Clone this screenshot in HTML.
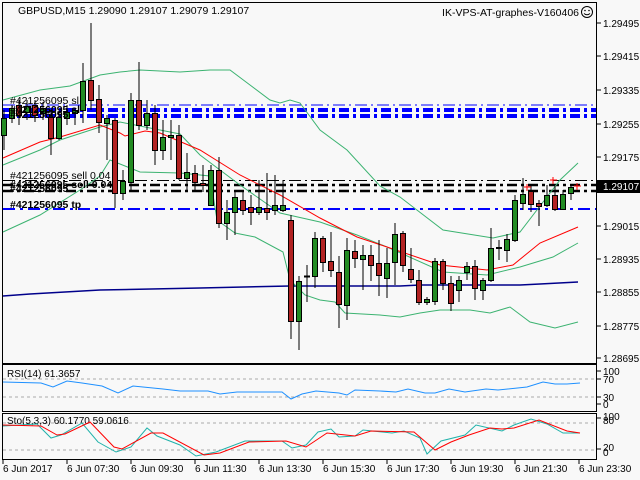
<!DOCTYPE html>
<html><head><meta charset="utf-8"><style>
html,body{margin:0;padding:0;background:#f8f8f8;width:640px;height:480px;overflow:hidden}
svg{display:block}
text{font-family:"Liberation Sans",sans-serif;font-size:10px;fill:#000}
</style></head><body>
<svg width="640" height="480" viewBox="0 0 640 480" xmlns="http://www.w3.org/2000/svg">
<rect width="640" height="480" fill="#f8f8f8"/>
<g fill="none" stroke="#000" stroke-width="1">
<rect x="2.5" y="2.5" width="594" height="361"/>
<rect x="2.5" y="364.5" width="594" height="47"/>
<rect x="2.5" y="413.5" width="594" height="46"/>
</g>
<g stroke="#000"><path d="M597 23h4M597 56h4M597 90h4M597 124h4M597 157h4M597 226h4M597 259h4M597 292h4M597 326h4M597 358h4M597 371h4M597 379h4M597 397h4M597 404h4M597 418h4M597 449h4"/>
<path d="M3 460v4M67 460v4M131 460v4M195 460v4M259 460v4M323 460v4M387 460v4M451 460v4M515 460v4M579 460v4"/></g>
<g>
<text x="603" y="27">1.29495</text><text x="603" y="60">1.29415</text><text x="603" y="94">1.29335</text><text x="603" y="128">1.29255</text><text x="603" y="161">1.29175</text><text x="603" y="230">1.29015</text><text x="603" y="263">1.28935</text><text x="603" y="296">1.28855</text><text x="603" y="330">1.28775</text><text x="603" y="362">1.28695</text>
<text x="603" y="375">100</text><text x="603" y="383">70</text><text x="603" y="401">30</text><text x="603" y="408">0</text>
<text x="603" y="420">100</text><text x="603" y="424">80</text><text x="603" y="451">20</text><text x="603" y="456">0</text>
</g>
<rect x="597" y="180" width="43" height="13" fill="#000"/>
<text x="603" y="190" style="fill:#fff">1.29107</text>
<g><text x="3" y="472">6 Jun 2017</text><text x="67" y="472">6 Jun 07:30</text><text x="131" y="472">6 Jun 09:30</text><text x="195" y="472">6 Jun 11:30</text><text x="259" y="472">6 Jun 13:30</text><text x="323" y="472">6 Jun 15:30</text><text x="387" y="472">6 Jun 17:30</text><text x="451" y="472">6 Jun 19:30</text><text x="515" y="472">6 Jun 21:30</text><text x="579" y="472">6 Jun 23:30</text></g>
<g fill="none">
<path d="M3 105H596" stroke="#0000ff" stroke-dasharray="12,4,2,4"/>
<path d="M3 110H596M3 116H596" stroke="#0000ff" stroke-width="4" stroke-dasharray="10,4,3,4"/>
<path d="M3 180.5H596" stroke="#000" stroke-dasharray="12,4,2,4"/>
<path d="M3 185H596M3 191H596" stroke="#000" stroke-width="2.5" stroke-dasharray="10,4,3,4"/>
<path d="M3 209H596" stroke="#0000ff" stroke-width="2" stroke-dasharray="12,5,3,5"/>
</g>
<g fill="none" stroke-width="1">
<path stroke="#00008b" stroke-width="1.5" d="M3 296L30 294L100 290L200 288L290 286L400 286L420 285L520 285L540 284L578 282"/>
<path stroke="#3cb371" d="M3 100L40 90L70 86L100 75L120 72L140 70L180 72L210 70L230 70L250 85L270 100L280 103L290 100L300 103L320 130L347 150L380 186L400 197L443 230L493 238L520 232L540 206L560 180L578 163"/>
<path stroke="#3cb371" d="M3 165L40 150L60 140L100 127L120 122L140 126L180 134L200 155L240 185L280 213L320 222L357 235L387 247L443 272L487 275L520 267L553 257L578 243"/>
<path stroke="#3cb371" d="M3 232L40 215L80 190L100 176L110 160L140 172L180 173L210 176L217 220L235 233L255 237L283 252L290 280L305 295L320 300L335 302L345 313L380 315L400 317L420 313L440 310L470 310L490 313L510 307L530 322L555 328L578 322"/>
<path stroke="#ff0000" d="M3 158L40 142L60 137L100 125L120 133L125 136L145 131L160 133L200 150L240 175L280 195L320 218L357 237L387 247L440 265L487 270L513 265L540 243L578 227"/>
</g>
<g stroke="#000" stroke-width="1">
<path d="M4 110V150M12 105V123M19 100V125M27 100V120M35 100V122M43 102V120M51 110V155M59 112V140M67 105V125M75 108V125M83 63V123M91 23V110M99 85V133M107 115V160M115 118V208M123 170V200M131 93V190M139 62V130M147 100V130M155 105V165M163 120V160M171 120V160M179 125V180M187 153V190M195 165V190M203 165V192M211 165V205M219 157V228M227 200V240M235 190V235M243 190V215M251 195V225M259 180V215M267 173V220M275 175V215M283 180V212M291 215V339M299 276V350M307 265V302M315 232V288M323 236V272M331 232V277M339 256V328M347 238V320M355 240V268M363 245V290M371 245V281M379 240V296M387 248V298M395 223V285M403 231V272M411 248V283M419 270V305M427 297V305M435 258V305M443 259V290M451 276V311M459 276V302M467 262V280M475 260V300M483 278V300M491 228V282M499 240V260M507 234V262M515 195V242M523 178V210M531 184V212M539 200V226M547 185V207M555 186V211M563 190V209M571 185V200"/>
</g>
<g stroke="#000" stroke-width="1" fill="#228b22">
<rect x="1.5" y="118.5" width="5" height="17"/><rect x="9.5" y="108.5" width="5" height="10"/><rect x="24.5" y="106.5" width="5" height="6"/><rect x="40.5" y="108.5" width="5" height="5"/><rect x="56.5" y="117.5" width="5" height="21"/><rect x="64.5" y="112.5" width="5" height="6"/><rect x="72.5" y="110.5" width="5" height="3"/><rect x="80.5" y="81.5" width="5" height="29"/><rect x="104.5" y="118.5" width="5" height="5"/><rect x="120.5" y="181.5" width="5" height="12"/><rect x="128.5" y="100.5" width="5" height="82"/><rect x="144.5" y="113.5" width="5" height="12"/><rect x="160.5" y="137.5" width="5" height="13"/><rect x="168.5" y="135.5" width="5" height="2"/><rect x="184.5" y="172.5" width="5" height="6"/><rect x="208.5" y="170.5" width="5" height="35"/><rect x="224.5" y="212.5" width="5" height="11"/><rect x="232.5" y="197.5" width="5" height="15"/><rect x="256.5" y="207.5" width="5" height="5"/><rect x="272.5" y="205.5" width="5" height="5"/><rect x="280.5" y="205.5" width="5" height="5"/><rect x="296.5" y="281.5" width="5" height="40"/><rect x="312.5" y="238.5" width="5" height="38"/><rect x="344.5" y="250.5" width="5" height="55"/><rect x="360.5" y="255.5" width="5" height="4"/><rect x="384.5" y="263.5" width="5" height="15"/><rect x="392.5" y="234.5" width="5" height="28"/><rect x="424.5" y="299.5" width="5" height="3"/><rect x="432.5" y="261.5" width="5" height="40"/><rect x="456.5" y="280.5" width="5" height="10"/><rect x="464.5" y="266.5" width="5" height="6"/><rect x="480.5" y="280.5" width="5" height="10"/><rect x="488.5" y="248.5" width="5" height="32"/><rect x="504.5" y="239.5" width="5" height="11"/><rect x="512.5" y="200.5" width="5" height="40"/><rect x="520.5" y="194.5" width="5" height="9"/><rect x="544.5" y="195.5" width="5" height="10"/><rect x="560.5" y="194.5" width="5" height="15"/><rect x="568.5" y="187.5" width="5" height="6"/>
</g>
<g stroke="#000" stroke-width="1" fill="#b22222">
<rect x="16.5" y="105.5" width="5" height="10"/><rect x="32.5" y="105.5" width="5" height="10"/><rect x="48.5" y="117.5" width="5" height="21"/><rect x="88.5" y="80.5" width="5" height="20"/><rect x="96.5" y="99.5" width="5" height="23"/><rect x="112.5" y="120.5" width="5" height="73"/><rect x="136.5" y="100.5" width="5" height="25"/><rect x="152.5" y="113.5" width="5" height="37"/><rect x="176.5" y="135.5" width="5" height="43"/><rect x="192.5" y="173.5" width="5" height="9"/><rect x="200.5" y="183.5" width="5" height="2"/><rect x="216.5" y="170.5" width="5" height="53"/><rect x="240.5" y="200.5" width="5" height="10"/><rect x="248.5" y="207.5" width="5" height="5"/><rect x="264.5" y="208.5" width="5" height="4"/><rect x="288.5" y="220.5" width="5" height="101"/><rect x="320.5" y="238.5" width="5" height="24"/><rect x="328.5" y="261.5" width="5" height="9"/><rect x="336.5" y="272.5" width="5" height="32"/><rect x="352.5" y="251.5" width="5" height="7"/><rect x="368.5" y="255.5" width="5" height="10"/><rect x="376.5" y="263.5" width="5" height="12"/><rect x="400.5" y="233.5" width="5" height="32"/><rect x="408.5" y="269.5" width="5" height="10"/><rect x="416.5" y="280.5" width="5" height="22"/><rect x="440.5" y="261.5" width="5" height="22"/><rect x="448.5" y="283.5" width="5" height="20"/><rect x="472.5" y="266.5" width="5" height="22"/><rect x="528.5" y="191.5" width="5" height="13"/><rect x="536.5" y="203.5" width="5" height="3"/><rect x="552.5" y="195.5" width="5" height="14"/>
</g>
<g stroke="#000" stroke-width="2"><path d="M304 276.5h6M496 248h6"/></g>
<g fill="#ff0000" stroke="#ff0000"><path d="M524 187h7M527 184v7M550 180h7M553 177v7M574 186h7M577 183v7"/></g>
<text x="10" y="104" style="font-size:10.5px">#421256095 sl</text>
<text x="10" y="113" style="font-size:10.5px;font-weight:bold">#421256095 sl</text>
<text x="10" y="118" style="font-size:10.5px;font-weight:bold">#421256095</text>
<text x="10" y="179" style="font-size:10.5px">#421256095 sell 0.04</text>
<text x="10" y="188" style="font-size:10.5px;font-weight:bold">#421256095 sell 0.04</text>
<text x="10" y="192" style="font-size:10.5px;font-weight:bold">#421256095</text>
<text x="10" y="208" style="font-size:10.5px;font-weight:bold">#421256095 tp</text>
<text x="18" y="14" style="font-size:10.5px">GBPUSD,M15  1.29090 1.29107 1.29079 1.29107</text>
<text x="579" y="16" text-anchor="end" style="font-size:10.5px">IK-VPS-AT-graphes-V160406</text>
<circle cx="587" cy="12" r="5.5" fill="none" stroke="#000"/>
<circle cx="585" cy="10.5" r="0.8"/><circle cx="589" cy="10.5" r="0.8"/>
<path d="M584 13.5q3 2.5 6 0" fill="none" stroke="#000"/>
<g fill="none" stroke="#aaa" stroke-dasharray="3,3"><path d="M3 379H596M3 397H596M3 423H596M3 450H596"/></g>
<text x="7" y="377">RSI(14) 61.3657</text>
<path fill="none" stroke="#1e90ff" d="M3 382L41 383L53 387L67 381L82 383L102 386L118 393L133 386L163 389L180 391L208 391L220 394L237 392L282 392L291 399L302 394L316 391L339 393L347 395L355 390L380 391L396 392L408 389L425 393L435 393L449 389L465 392L486 389L498 390L527 387L543 382L555 384L567 384L580 383"/>
<text x="7" y="424">Sto(5,3,3) 60.1770 59.0616</text>
<path fill="none" stroke="#20b2aa" d="M3 426L37 424L51 438L61 435L82 423L98 442L116 452L131 447L147 428L157 436L180 445L196 456L216 452L245 441L282 441L292 448L306 445L318 432L331 429L339 437L355 436L363 430L392 433L404 431L420 438L427 454L441 441L465 435L476 425L502 431L514 425L531 419L547 424L563 433L580 433"/>
<path fill="none" stroke="#ff0000" d="M3 425L41 426L57 435L65 434L90 422L114 447L122 449L151 433L163 433L204 455L220 453L249 442L286 441L306 447L327 433L355 436L371 431L414 432L435 450L451 442L469 435L490 428L502 429L514 428L539 420L567 431L580 433"/>
</svg>
</body></html>
